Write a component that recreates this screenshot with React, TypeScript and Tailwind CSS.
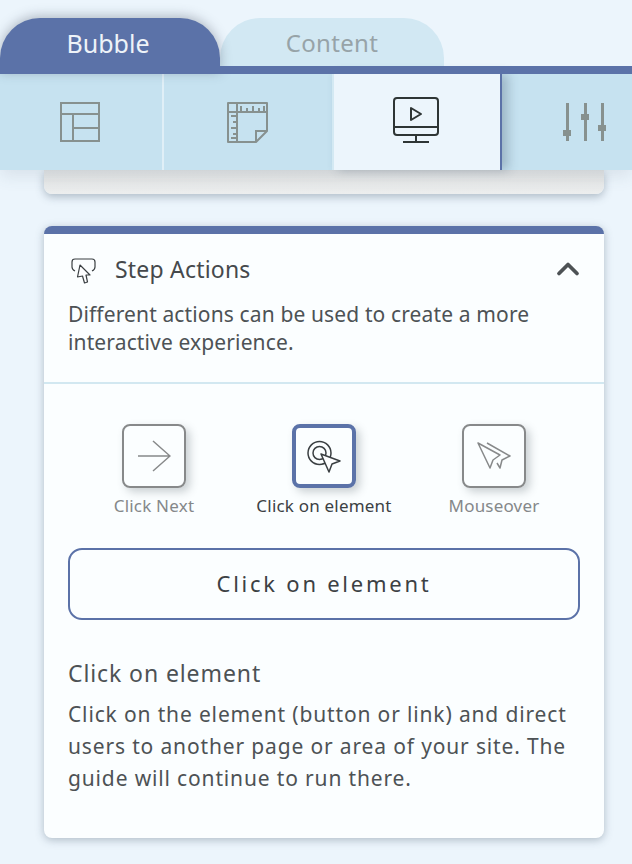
import React from 'react';
import { ChevronUp } from 'lucide-react';

const LayoutIcon = () => (
  <svg width="42" height="42" viewBox="0 0 42 42" fill="none" stroke="#87918f" strokeWidth="2">
    <rect x="1" y="1" width="38" height="38" />
    <path d="M1 12H39M13 12V39M13 26H39" />
  </svg>
);

const RulerIcon = () => (
  <svg width="42" height="42" viewBox="0 0 42 42" fill="none" stroke="#87918f" strokeWidth="2">
    <path d="M1 1H40V29L29 40H1Z" strokeLinejoin="round" />
    <path d="M1 10H40M10 1V40M29 40V29H40" />
    <path d="M14 4V10M20 6V10M26 4V10M32 6V10M37 4V10M4 14H10M6 20H10M4 26H10M6 32H10M4 36H10" />
  </svg>
);

const MonitorIcon = () => (
  <svg width="48" height="48" viewBox="0 0 48 48" fill="none" stroke="#2e3535" strokeWidth="2">
    <rect x="1" y="1" width="44" height="37" rx="3" />
    <path d="M1 30H45M23 38V45M10 45H36" />
    <path d="M18 11V23L28 17Z" strokeLinejoin="round" />
  </svg>
);

const SlidersIcon = () => (
  <svg width="44" height="40" viewBox="0 0 44 40" fill="#87918f">
    <rect x="4" y="0" width="3" height="38" />
    <rect x="1" y="27" width="8" height="6" />
    <rect x="22" y="0" width="3" height="38" />
    <rect x="19" y="11" width="8" height="6" />
    <rect x="39" y="0" width="3" height="38" />
    <rect x="36" y="22" width="8" height="6" />
  </svg>
);

const TapIcon = () => (
  <svg width="26" height="30" viewBox="0 0 26 30" fill="none" stroke="#3a3f42" strokeWidth="1.2" strokeLinejoin="round">
    <path d="M4 17C2 16 1 15 1 13V8C1 6 2 5 4 5H21C23 5 24 6 24 8V13C24 15 23 16 21 17" />
    <path d="M9 11L19 21L15 21L16.500 28L13.500 29L11.500 22L6.500 23Z" fill="#fdfeff" />
  </svg>
);

const ArrowIcon = () => (
  <svg width="34" height="34" viewBox="0 0 34 34" fill="none" stroke="#87898a" strokeWidth="1.5">
    <path d="M1 17H33M16 2L33 17L16 32" />
  </svg>
);

const TargetIcon = () => (
  <svg width="34" height="34" viewBox="0 0 34 34" fill="none" stroke="#3a3f42" strokeWidth="1.5" strokeLinejoin="round">
    <circle cx="12.500" cy="14" r="11.500" />
    <circle cx="12.500" cy="14" r="6.500" />
    <path d="M14 15L33 22L25 25L22 33Z" fill="#fdfeff" />
  </svg>
);

const PlanesIcon = () => (
  <svg width="36" height="30" viewBox="0 0 36 30" fill="none" stroke="#87898a" strokeWidth="1.5" strokeLinejoin="round">
    <path d="M2 2L24 14L17 19L14 27Z" />
    <path d="M11 2L34 15L26 19L24 27L21 22" />
  </svg>
);

const ActionOption: React.FC<{ label: string; active?: boolean; icon: React.ReactNode }> = ({ label, active, icon }) => (
  <div className="flex w-[170px] flex-col items-center">
    <div
      className={`flex h-16 w-16 items-center justify-center rounded-lg shadow-[4px_4px_8px_rgba(60,70,80,0.25)] ${
        active ? 'border-4 border-[#5b72a8]' : 'border-2 border-[#87898a]'
      }`}
    >
      {icon}
    </div>
    <span className={`mt-[6px] text-[17px] leading-6 tracking-[0.2px] ${active ? 'text-[#3c4144]' : 'text-[#85888a]'}`}>
      {label}
    </span>
  </div>
);

export default function App() {
  return (
    <div
      className="h-[864px] w-[632px] overflow-hidden bg-[#ecf5fc] text-[#4d5255]"
      style={{ fontFamily: '"Noto Sans", sans-serif' }}
    >
      <div className="relative z-10 shadow-[0_6px_16px_rgba(70,90,110,0.12)]">
        <div className="flex h-[66px] items-end pt-[18px]">
          <div className="relative z-10 -mb-2 flex h-14 w-[220px] justify-center rounded-t-[40px] bg-[#5b72a8] pr-1 pt-[7px] text-[25px] leading-9 text-[#eef3f8] shadow-[0_-2px_12px_rgba(60,70,90,0.35)]">
            Bubble
          </div>
          <div className="flex h-12 w-[224px] justify-center rounded-t-[40px] bg-[#d2e8f3] pt-[7px] text-2xl leading-9 tracking-[0.3px] text-[#97a3a8]">
            Content
          </div>
        </div>
        <div className="relative z-20 h-2 bg-[#5b72a8]" />
        <div className="flex h-24 bg-[#c6e2f0]">
          <div className="flex w-[164px] items-center justify-center border-r-2 border-[#e0eff7] pt-[2px]">
            <LayoutIcon />
          </div>
          <div className="flex w-[168px] items-center justify-center pt-[2px]">
            <RulerIcon />
          </div>
          <div className="flex w-[170px] items-center justify-center border-x-2 border-l-[#d4e9f3] border-r-[#5b72a8] bg-[#ecf5fc] pb-[2px] shadow-[6px_0_10px_rgba(60,80,100,0.3)]">
            <MonitorIcon />
          </div>
          <div className="flex flex-1 items-center justify-center pl-[34px] pt-[2px]">
            <SlidersIcon />
          </div>
        </div>
      </div>

      <div className="pl-11 pr-7">
        <div className="h-6 rounded-b-lg bg-gradient-to-b from-[#e0e2e3] to-[#eceeee] shadow-[0_3px_8px_rgba(60,80,100,0.35)]" />

        <div className="mt-8 h-[612px] overflow-hidden rounded-lg border-t-8 border-[#5b72a8] bg-[#fbfeff] shadow-[0_2px_8px_rgba(60,80,100,0.35)]">
          <div className="h-[150px] border-b-2 border-[#d2e8f1] px-6 pt-[17px]">
            <div className="flex h-9 items-center justify-between">
              <div className="ml-[3px] flex items-center">
                <TapIcon />
                <span className="ml-[18px] text-[23px] tracking-[0.2px] text-[#45494c]">Step Actions</span>
              </div>
              <ChevronUp size={36} strokeWidth={2.5} className="mr-[-6px] text-[#4d5255]" />
            </div>
            <p className="mt-[13px] text-[21px] leading-7 tracking-[0.13px]">
              Different actions can be used to create a more interactive experience.
            </p>
          </div>

          <div className="px-6 pt-10">
            <div className="flex justify-center">
              <ActionOption label="Click Next" icon={<ArrowIcon />} />
              <ActionOption label="Click on element" active icon={<TargetIcon />} />
              <ActionOption label="Mouseover" icon={<PlanesIcon />} />
            </div>
            <button className="mt-[30px] h-[72px] w-full rounded-[14px] border-2 border-[#5b72a8] pb-[2px] text-[22px] tracking-[2.75px] text-[#3c4144]">
              Click on element
            </button>
            <h3 className="mt-[37px] text-[23px] leading-8 tracking-[0.9px]">Click on element</h3>
            <p className="mt-[9px] text-[21px] leading-8 tracking-[0.85px]">
              Click on the element (button or link) and direct users to another page or area of your site. The guide will continue to run there.
            </p>
          </div>
        </div>
      </div>
    </div>
  );
}
